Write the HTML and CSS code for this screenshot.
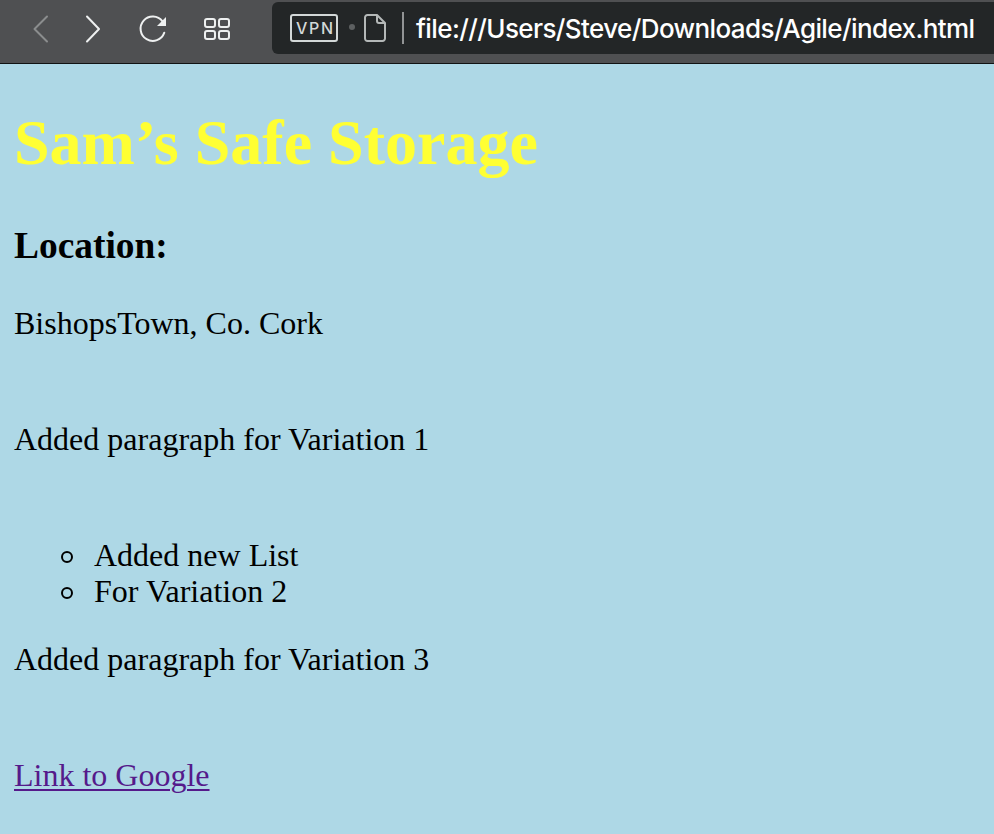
FILE: index.html
```html
<!DOCTYPE html>
<html lang="en">
<head>
<meta charset="utf-8">
<title>Sam’s Safe Storage</title>
<link rel="stylesheet" href="styles.css">
</head>
<body>
<header class="toolbar">
  <nav class="controls">
    <svg class="back" width="18" height="30" viewBox="0 0 18 30"><path d="M14 2.500L1.500 15L14 27.500"/></svg>
    <svg class="forward" width="18" height="30" viewBox="0 0 18 30"><path d="M3 2.500L15 15L3 27.500"/></svg>
    <svg class="reload" width="30" height="30" viewBox="0 0 30 30"><path d="M26.300 18.700A12.200 12.200 0 1 1 24.500 7.300"/><path class="solid" d="M28 3v9h-9z"/></svg>
    <svg class="grid" width="28" height="24" viewBox="0 0 28 24"><rect x="2" y="2" width="10" height="8" rx="2"/><rect x="16" y="2" width="10" height="8" rx="2"/><rect x="2" y="14" width="10" height="8" rx="2"/><rect x="16" y="14" width="10" height="8" rx="2"/></svg>
  </nav>
  <div class="address">
    <span class="vpn">VPN</span>
    <span class="dot"></span>
    <svg class="file" width="22" height="28" viewBox="0 0 22 28"><path d="M13 1H3.500A2.500 2.500 0 0 0 1 3.500v21A2.500 2.500 0 0 0 3.500 27h15a2.500 2.500 0 0 0 2.500-2.500V9L13 1v6a2 2 0 0 0 2 2h6"/></svg>
    <span class="divider"></span>
    <span class="url">file:///Users/Steve/Downloads/Agile/index.html</span>
  </div>
</header>
<main class="page">
  <h1>Sam’s Safe Storage</h1>
  <h3>Location:</h3>
  <p>BishopsTown, Co. Cork</p>
  <p>Added paragraph for Variation 1</p>
  <ul>
    <li>Added new List</li>
    <li>For Variation 2</li>
  </ul>
  <p>Added paragraph for Variation 3</p>
  <a href="#">Link to Google</a>
</main>
</body>
</html>
```
FILE: styles.css
```css
*, *::before { box-sizing: border-box; }
body {
  margin: 0;
  height: 834px;
  overflow: hidden;
  background: #aed8e6;
  color: #000;
  font: 32px/36px "Liberation Serif", serif;
}
.toolbar {
  display: flex;
  height: 64px;
  background: #4f5052;
  border-bottom: 1px solid #111314;
}
.controls {
  display: flex;
  align-items: center;
  width: 272px;
  height: 58px;
  padding-left: 33px;
}
svg { display: block; flex: none; }
.controls svg, .file {
  fill: none;
  stroke: #eef0f0;
  stroke-width: 2;
  stroke-linecap: round;
  stroke-linejoin: round;
}
.controls .back { stroke: #8b8d8e; }
.forward { margin-left: 33px; }
.reload { margin-left: 36px; }
.reload .solid { fill: #eef0f0; stroke: none; }
.grid { margin-left: 35px; }
.address {
  display: flex;
  align-items: center;
  width: 722px;
  height: 52px;
  margin-top: 2px;
  padding-left: 18px;
  border-radius: 6px 0 0 6px;
  background: #232627;
}
.vpn {
  width: 48px;
  height: 28px;
  padding-left: 4px;
  border: 2px solid #d3d8d8;
  border-radius: 3px;
  color: #d3d8d8;
  font: 500 16px/24px Inter, sans-serif;
  letter-spacing: 1.7px;
}
.dot {
  width: 6px;
  height: 6px;
  margin: -3px 0 0 11px;
  border-radius: 50%;
  background: #5d6061;
}
.address .file { margin-left: 9px; stroke: #b4b8b8; }
.divider {
  width: 2px;
  height: 32px;
  margin-left: 16px;
  background: #929495;
}
.url {
  margin: 2px 0 0 12px;
  color: #fff;
  font: 500 26px/32px Inter, sans-serif;
  letter-spacing: -0.6px;
  white-space: nowrap;
}
.page { padding: 43px 14px 0; }
h1 {
  margin: 0 0 46px;
  color: #ffff33;
  font-size: 64px;
  line-height: 72px;
}
h3 {
  margin: 0 0 38px;
  font-size: 37.44px;
  line-height: 42px;
}
p { margin: 0 0 80px; }
ul {
  margin: 0 0 32px;
  padding: 0;
  list-style: none;
}
li {
  display: flex;
  align-items: center;
  padding-left: 47px;
}
li::before {
  content: "";
  width: 12px;
  height: 12px;
  margin: 3px 21px 0 0;
  border: 2px solid #000;
  border-radius: 50%;
}
a {
  color: #551a8b;
  text-decoration-thickness: 2px;
  text-underline-offset: 3px;
}
```
